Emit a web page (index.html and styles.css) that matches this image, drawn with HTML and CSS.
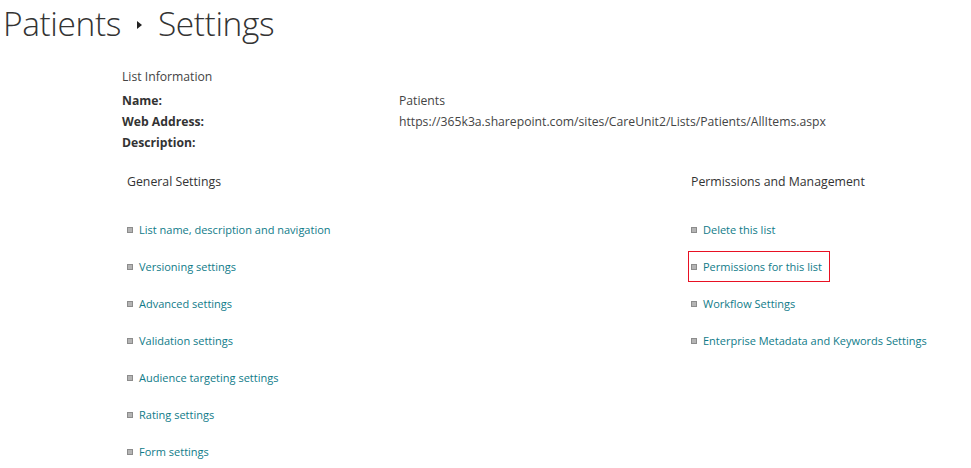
FILE: index.html
```html
<!DOCTYPE html>
<html lang="en">
<head>
    <meta charset="UTF-8">
    <title>Patients - Settings</title>
    <link rel="stylesheet" href="styles.css">
</head>
<body>
    <h1 class="page-title">
        <span>Patients</span>
        <span class="crumb-arrow"></span>
        <span>Settings</span>
    </h1>

    <div class="content">
        <div class="list-info">
            <div class="info-heading">List Information</div>
            <div class="info-row">
                <span class="info-label">Name:</span>
                <span class="info-value">Patients</span>
            </div>
            <div class="info-row">
                <span class="info-label">Web Address:</span>
                <span class="info-value">https://365k3a.sharepoint.com/sites/CareUnit2/Lists/Patients/AllItems.aspx</span>
            </div>
            <div class="info-row">
                <span class="info-label">Description:</span>
                <span class="info-value"></span>
            </div>
        </div>

        <div class="settings">
            <div class="settings-col general">
                <h3>General Settings</h3>
                <ul>
                    <li><a href="#">List name, description and navigation</a></li>
                    <li><a href="#">Versioning settings</a></li>
                    <li><a href="#">Advanced settings</a></li>
                    <li><a href="#">Validation settings</a></li>
                    <li><a href="#">Audience targeting settings</a></li>
                    <li><a href="#">Rating settings</a></li>
                    <li><a href="#">Form settings</a></li>
                </ul>
            </div>
            <div class="settings-col perms">
                <h3>Permissions and Management</h3>
                <ul>
                    <li><a href="#">Delete this list</a></li>
                    <li class="highlight"><a href="#">Permissions for this list</a></li>
                    <li><a href="#">Workflow Settings</a></li>
                    <li><a href="#">Enterprise Metadata and Keywords Settings</a></li>
                </ul>
            </div>
        </div>
    </div>
</body>
</html>
```

FILE: styles.css
```css
body {
    margin: 0;
    font-family: "Open Sans", "Noto Sans", sans-serif;
    color: #333;
    background: #fff;
}

.page-title {
    margin: 0;
    padding: 0 0 0 3px;
    height: 46px;
    display: flex;
    align-items: center;
    gap: 16px;
    font-size: 33.5px;
    font-weight: 300;
    color: #333;
    letter-spacing: -0.4px;
}

.crumb-arrow {
    width: 0;
    height: 0;
    border-top: 4px solid transparent;
    border-bottom: 4px solid transparent;
    border-left: 5px solid #222;
    margin-top: 4px;
}

.content {
    padding: 19px 0 0 122px;
}

.info-heading {
    font-size: 12.2px;
    color: #444;
    height: 25px;
    line-height: 23px;
}

.info-row {
    display: flex;
    font-size: 12.2px;
    height: 21px;
    line-height: 21px;
}

.info-label {
    width: 277px;
    font-weight: 700;
    color: #333;
}

.info-value {
    color: #444;
}

.settings {
    display: flex;
    padding: 20px 0 0 5px;
}

.settings-col.general {
    width: 564px;
}

.settings-col h3 {
    margin: 0;
    font-size: 12.3px;
    font-weight: 400;
    color: #333;
    height: 38px;
    line-height: 18px;
}

.settings-col ul {
    list-style: none;
    margin: 0;
    padding: 0;
}

.settings-col li {
    position: relative;
    display: flex;
    align-items: center;
    height: 37px;
    font-size: 11px;
}

.settings-col li::before {
    content: "";
    width: 4px;
    height: 4px;
    background: #b4b4b4;
    border: 1px solid #8c8c8c;
    margin-right: 6px;
}

.settings-col a {
    color: #0f7b89;
    text-decoration: none;
}

.settings-col li.highlight::after {
    content: "";
    position: absolute;
    left: -3px;
    top: 3px;
    width: 140px;
    height: 29px;
    border: 1px solid #e81123;
}
```
